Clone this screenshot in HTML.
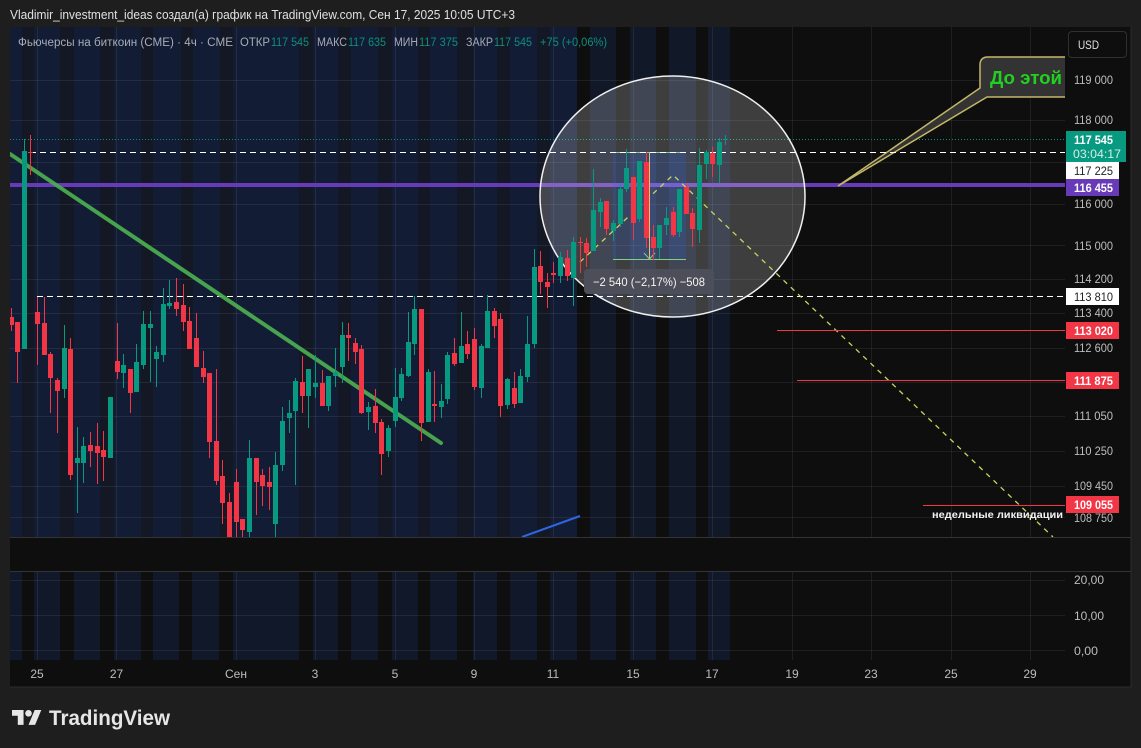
<!DOCTYPE html>
<html lang="ru"><head><meta charset="utf-8"><title>TradingView</title>
<style>
html,body{margin:0;padding:0;background:#1e1e1e;width:1141px;height:748px;overflow:hidden}
svg{display:block}
text{font-family:"Liberation Sans","Noto Sans CJK SC",sans-serif;font-size:12px}
.a{fill:#bdbdbd;font-size:12px}
.t{fill:#bdbdbd;font-size:12px;text-anchor:middle}
.l{fill:#a6abb8;font-size:11.5px}
.g{fill:#0d8f7c;font-size:11.5px}
</style></head><body>
<svg width="1141" height="748" viewBox="0 0 1141 748" xmlns="http://www.w3.org/2000/svg">
<defs><clipPath id="m"><rect x="10" y="27" width="1055" height="510"/></clipPath></defs>
<rect width="1141" height="748" fill="#1e1e1e"/>
<rect x="10" y="27" width="1121" height="660" fill="#0e0e0e"/>
<path d="M1131 27V687H10" fill="none" stroke="#2c2c2c"/>

<!-- main pane sessions -->
<rect x="10" y="27" width="567" height="510" fill="#131c35"/>
<path fill="#141824" d="M22 27h12v510h-12zM60 27h14v510h-14zM100 27h14v510h-14zM141 27h12v510h-12zM181 27h12v510h-12zM220 27h13v510h-13zM299 27h14v510h-14zM338 27h13v510h-13zM378 27h14v510h-14zM418 27h12v510h-12zM457 27h16v510h-16zM497 27h13v510h-13zM537 27h13v510h-13z"/>
<path fill="#111828" d="M590 27h26v510h-26zM630 27h26v510h-26zM669 27h27v510h-27zM708 27h22v510h-22z"/>
<!-- lower pane sessions -->
<rect x="10" y="572" width="720" height="88" fill="#10182a"/>
<path fill="#0e0e0e" d="M22 572h12v88h-12zM60 572h14v88h-14zM100 572h14v88h-14zM141 572h12v88h-12zM179 572h13v88h-13zM219 572h14v88h-14zM299 572h14v88h-14zM338 572h13v88h-13zM378 572h14v88h-14zM418 572h12v88h-12zM457 572h16v88h-16zM497 572h13v88h-13zM537 572h13v88h-13zM577 572h13v88h-13zM616 572h14v88h-14zM656 572h13v88h-13zM696 572h12v88h-12z"/>

<!-- grid -->
<path stroke="#fff" stroke-opacity=".07" fill="none" d="M10 80.500H1065M10 120.500H1065M10 162.500H1065M10 204.500H1065M10 245.500H1065M10 279.500H1065M10 313.500H1065M10 348.500H1065M10 382.500H1065M10 416.500H1065M10 451.500H1065M10 486.500H1065M10 517.500H1065M10 580.500H1065M10 615.500H1065M10 650.500H1065"/>
<path stroke="#fff" stroke-opacity=".07" fill="none" d="M37.500 27V537M116.500 27V537M236.500 27V537M315.500 27V537M395.500 27V537M474.500 27V537M553.500 27V537M633.500 27V537M712.500 27V537M792.500 27V537M871.500 27V537M951.500 27V537M1030.500 27V537M37.500 572V660M116.500 572V660M236.500 572V660M315.500 572V660M395.500 572V660M474.500 572V660M553.500 572V660M633.500 572V660M712.500 572V660M792.500 572V660M871.500 572V660M951.500 572V660M1030.500 572V660"/>
<path stroke="#333" d="M10 537.500H1131M10 571.500H1131"/>

<g clip-path="url(#m)">
<rect x="10" y="183" width="1055" height="4" fill="#673ab7"/>
<path d="M10 139.500H1065" stroke="#0d8f7c" stroke-dasharray="1 2" fill="none"/>
<path d="M838 186L980 88V65Q980 57 988 57H1066V97H987Z" fill="#333" stroke="#c4b768" stroke-width="1.500"/>
<ellipse cx="672.500" cy="196.500" rx="132.500" ry="120.500" fill="#fff" fill-opacity=".2" stroke="#f0f0f0" stroke-width="1.500"/>
<rect x="613" y="152" width="73" height="107" fill="#2962ff" fill-opacity=".18"/>
<path d="M613 152.500H686M613 259.500H686" stroke="#82cf86" fill="none"/>
<path d="M649.500 152V259" stroke="#d8c27a" fill="none"/>
<path d="M644 253L649.500 259L655 253" stroke="#8fc98f" fill="none"/>
<path d="M30 152.500H1065M37 296.500H1065" stroke="#fff" stroke-width="1" stroke-dasharray="6 4" fill="none"/>
<path d="M580 262L673 175L1053 537" stroke="#c9d45c" stroke-width="1.300" stroke-dasharray="5 5" fill="none"/>
<path d="M10 154L441 443" stroke="#4caf50" stroke-width="4" stroke-linecap="round" fill="none" stroke-opacity=".92"/>
<path d="M522 537L580 516" stroke="#2f66e0" stroke-width="2" fill="none"/>
<path d="M777 330.500H1065M797 380.500H1065M923 505.500H1065" stroke="#f23645" fill="none"/>

<!-- green wicks -->
<path fill="none" stroke="#089981" stroke-width="1" d="M24.500 139V349M64.500 325V398M77.500 427V513M83.500 437V483M123.500 354V388M136.500 344V392M143.500 311V369M150.500 311V382M156.500 346V387M163.500 288V362M169.500 280V309M249.500 440V537M275.500 452V537M282.500 407V471M289.500 400V433M295.500 378V485M308.500 369V428M315.500 355V398M328.500 376V411M335.500 348V387M342.500 322V383M368.500 402V430M388.500 425V457M395.500 368V427M401.500 368V401M408.500 312V377M414.500 296V355M428.500 369V422M441.500 384V418M447.500 352V404M461.500 312V363M481.500 344V398M487.500 295V348M507.500 378V409M520.500 369V403M527.500 316V382M534.500 249V348M560.500 252V283M573.500 237V306M593.500 169V251M600.500 198V227M613.500 220V241M620.500 183V227M626.500 149V192M639.500 161V222M659.500 225V259M666.500 207V235M679.500 189V237M699.500 148V243M706.500 150V179M719.500 138V183M725.500 135V145"/>
<!-- green bodies -->
<path fill="none" stroke="#089981" stroke-width="5" d="M24.500 151V349M64.500 348V389M77.500 458V463M83.500 446V463M110.500 397V458M123.500 365V373M136.500 362V392M143.500 324V365M150.500 324V328M156.500 352V359M163.500 304V355M169.500 303V306M249.500 458V532M275.500 465V524M282.500 421V465M289.500 413V418M295.500 381V411M308.500 369V396M315.500 383V387M328.500 376V406M335.500 372V376M342.500 335V367M368.500 407V412M388.500 428V451M395.500 397V421M401.500 374V398M408.500 342V376M414.500 309V344M428.500 372V422M441.500 401V407M447.500 355V399M461.500 346V363M481.500 346V388M487.500 311V348M507.500 379V405M520.500 376V403M527.500 344V377M534.500 267V344M560.500 257V276M573.500 242V278M593.500 210V251M600.500 202V212M613.500 223V231M620.500 189V224M626.500 168V189M639.500 161V219M659.500 225V248M666.500 218V225M679.500 189V232M699.500 165V230M706.500 152V164M719.500 142V165M725.500 139V140"/>
<!-- red wicks -->
<path fill="none" stroke="#f23645" stroke-width="1" d="M11.500 308V331M17.500 322V383M30.500 135V175M37.500 297V365M44.500 297V355M50.500 352V413M57.500 378V433M70.500 338V480M90.500 432V467M97.500 423V484M103.500 431V481M117.500 323V379M130.500 369V413M176.500 278V316M183.500 284V331M189.500 307V349M196.500 313V367M203.500 351V383M209.500 373V458M216.500 369V485M222.500 460V524M229.500 493V537M236.500 469V537M242.500 519V537M256.500 458V515M262.500 469V506M269.500 467V510M302.500 356V413M322.500 370V406M348.500 323V361M355.500 338V364M361.500 345V414M375.500 389V433M381.500 419V475M421.500 309V441M434.500 371V422M454.500 338V366M467.500 331V359M474.500 328V390M494.500 308V338M500.500 313V417M514.500 372V408M540.500 251V294M547.500 273V308M553.500 262V283M567.500 250V281M580.500 237V273M586.500 238V267M606.500 201V235M633.500 177V240M646.500 152V248M653.500 225V260M673.500 207V237M686.500 185V214M692.500 208V247M712.500 147V177"/>
<!-- red bodies -->
<path fill="none" stroke="#f23645" stroke-width="5" d="M11.500 317V325M17.500 322V352M30.500 152V153M37.500 312V324M44.500 323V355M50.500 354V378M57.500 380V391M70.500 349V475M90.500 445V451M97.500 446V453M103.500 450V457M117.500 361V372M130.500 369V393M176.500 302V309M183.500 305V322M189.500 321V349M196.500 338V367M203.500 368V377M209.500 373V442M216.500 441V481M222.500 476V503M229.500 502V537M236.500 482V522M242.500 519V530M256.500 458V482M262.500 475V486M269.500 482V487M302.500 382V396M322.500 383V406M348.500 335V338M355.500 343V352M361.500 349V413M375.500 406V423M381.500 422V454M421.500 309V423M434.500 404V406M454.500 353V364M467.500 344V354M474.500 339V387M494.500 311V326M500.500 319V406M514.500 388V404M540.500 266V282M547.500 282V287M553.500 273V275M567.500 258V276M580.500 242V243M586.500 243V253M606.500 201V229M633.500 177V223M646.500 162V238M653.500 237V248M673.500 212V235M686.500 187V214M692.500 213V229M712.500 153V164"/>

<rect x="584" y="269" width="130" height="25" rx="4" fill="#4c4f59"/>
<text x="593" y="286" fill="#f4f4f4" textLength="112" lengthAdjust="spacingAndGlyphs" style="font-size:12px">−2 540 (−2,17%) −508</text>
<text x="990" y="84" fill="#22d022" font-weight="bold" textLength="72" lengthAdjust="spacingAndGlyphs" style="font-size:18px">До этой</text>
<text x="932" y="518" fill="#f2f2f2" font-weight="bold" textLength="131" lengthAdjust="spacingAndGlyphs" style="font-size:10.500px">недельные ликвидации</text>
</g>

<!-- header -->
<text x="10" y="19" fill="#e0e0e0" textLength="505" lengthAdjust="spacingAndGlyphs" style="font-size:12.500px">Vladimir_investment_ideas создал(а) график на TradingView.com, Сен 17, 2025 10:05 UTC+3</text>

<!-- legend -->
<text class="l" x="18" y="46" textLength="215" lengthAdjust="spacingAndGlyphs">Фьючерсы на биткоин (СМЕ) · 4ч · CME</text>
<text class="l" x="240" y="46" textLength="30" lengthAdjust="spacingAndGlyphs">ОТКР</text>
<text class="g" x="271" y="46" textLength="38" lengthAdjust="spacingAndGlyphs">117 545</text>
<text class="l" x="317" y="46" textLength="30" lengthAdjust="spacingAndGlyphs">МАКС</text>
<text class="g" x="348" y="46" textLength="38" lengthAdjust="spacingAndGlyphs">117 635</text>
<text class="l" x="394" y="46" textLength="24" lengthAdjust="spacingAndGlyphs">МИН</text>
<text class="g" x="419" y="46" textLength="39" lengthAdjust="spacingAndGlyphs">117 375</text>
<text class="l" x="466" y="46" textLength="27" lengthAdjust="spacingAndGlyphs">ЗАКР</text>
<text class="g" x="494" y="46" textLength="38" lengthAdjust="spacingAndGlyphs">117 545</text>
<text class="g" x="540" y="46" textLength="67" lengthAdjust="spacingAndGlyphs">+75 (+0,06%)</text>

<!-- USD button -->
<rect x="1068.500" y="31.500" width="58" height="26" rx="3.500" fill="#0e0e0e" stroke="#2f2f2f"/>
<text x="1078" y="49" fill="#e0e0e0" textLength="21" lengthAdjust="spacingAndGlyphs" style="font-size:12px">USD</text>

<!-- price axis -->
<text class="a" x="1074" y="84" textLength="39" lengthAdjust="spacingAndGlyphs">119 000</text>
<text class="a" x="1074" y="124" textLength="39" lengthAdjust="spacingAndGlyphs">118 000</text>
<text class="a" x="1074" y="208" textLength="39" lengthAdjust="spacingAndGlyphs">116 000</text>
<text class="a" x="1074" y="250" textLength="39" lengthAdjust="spacingAndGlyphs">115 000</text>
<text class="a" x="1074" y="283" textLength="39" lengthAdjust="spacingAndGlyphs">114 200</text>
<text class="a" x="1074" y="317" textLength="39" lengthAdjust="spacingAndGlyphs">113 400</text>
<text class="a" x="1074" y="352" textLength="39" lengthAdjust="spacingAndGlyphs">112 600</text>
<text class="a" x="1074" y="420" textLength="39" lengthAdjust="spacingAndGlyphs">111 050</text>
<text class="a" x="1074" y="455" textLength="39" lengthAdjust="spacingAndGlyphs">110 250</text>
<text class="a" x="1074" y="490" textLength="39" lengthAdjust="spacingAndGlyphs">109 450</text>
<text class="a" x="1074" y="522" textLength="39" lengthAdjust="spacingAndGlyphs">108 750</text>
<text class="a" x="1074" y="584" textLength="30" lengthAdjust="spacingAndGlyphs">20,00</text>
<text class="a" x="1074" y="620" textLength="30" lengthAdjust="spacingAndGlyphs">10,00</text>
<text class="a" x="1074" y="655" textLength="24" lengthAdjust="spacingAndGlyphs">0,00</text>

<!-- price tags -->
<rect x="1066" y="131" width="60" height="31" fill="#089981"/>
<text x="1074" y="144" fill="#fff" font-weight="bold" textLength="39" lengthAdjust="spacingAndGlyphs" style="font-size:12px">117 545</text>
<text x="1073" y="158" fill="#d2eee8" textLength="48" lengthAdjust="spacingAndGlyphs" style="font-size:12px">03:04:17</text>
<rect x="1066" y="162" width="53" height="17" fill="#fff"/>
<text x="1074" y="175" fill="#222" textLength="39" lengthAdjust="spacingAndGlyphs" style="font-size:12px">117 225</text>
<rect x="1066" y="179" width="53" height="17" fill="#673ab7"/>
<text x="1074" y="192" fill="#fff" font-weight="bold" textLength="39" lengthAdjust="spacingAndGlyphs" style="font-size:12px">116 455</text>
<rect x="1066" y="288" width="53" height="17" fill="#fff"/>
<text x="1074" y="301" fill="#222" textLength="39" lengthAdjust="spacingAndGlyphs" style="font-size:12px">113 810</text>
<rect x="1066" y="322" width="53" height="17" fill="#f23645"/>
<text x="1074" y="335" fill="#fff" font-weight="bold" textLength="39" lengthAdjust="spacingAndGlyphs" style="font-size:12px">113 020</text>
<rect x="1066" y="372" width="53" height="17" fill="#f23645"/>
<text x="1074" y="385" fill="#fff" font-weight="bold" textLength="39" lengthAdjust="spacingAndGlyphs" style="font-size:12px">111 875</text>
<rect x="1066" y="496" width="53" height="17" fill="#f23645"/>
<text x="1074" y="509" fill="#fff" font-weight="bold" textLength="39" lengthAdjust="spacingAndGlyphs" style="font-size:12px">109 055</text>

<!-- time axis -->
<text class="t" x="37" y="678">25</text>
<text class="t" x="116.500" y="678">27</text>
<text class="t" x="236" y="678">Сен</text>
<text class="t" x="315" y="678">3</text>
<text class="t" x="395" y="678">5</text>
<text class="t" x="474" y="678">9</text>
<text class="t" x="553" y="678">11</text>
<text class="t" x="633" y="678">15</text>
<text class="t" x="712" y="678">17</text>
<text class="t" x="792" y="678">19</text>
<text class="t" x="871" y="678">23</text>
<text class="t" x="951" y="678">25</text>
<text class="t" x="1030" y="678">29</text>

<!-- logo -->
<g transform="translate(12 706.700) scale(.825)" fill="#e6e6e6">
<path d="M14 22H7V11H0V4h14v18zM28 22h-8l7.500-18h8L28 22z"/><circle cx="20" cy="8" r="4"/>
</g>
<text x="49" y="725" fill="#e6e6e6" font-weight="bold" textLength="121" lengthAdjust="spacingAndGlyphs" style="font-size:21px">TradingView</text>
</svg>
</body></html>
